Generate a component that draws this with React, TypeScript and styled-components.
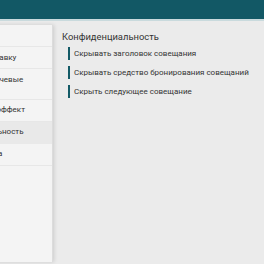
import styled, { createGlobalStyle } from 'styled-components';

const GlobalStyle = createGlobalStyle`
    html, body {
        margin: 0;
        padding: 0;
        background: #ebebeb;
        font-family: Roboto, "Noto Sans", sans-serif;
        overflow: hidden;
    }
`;

const Page = styled.div`
    width: 264px;
    height: 264px;
    display: flex;
    flex-direction: column;
    background: #ebebeb;
    overflow: hidden;
`;

const TopBar = styled.div`
    height: 19px;
    background: #125865;
    border-bottom: 2px solid #c9dadd;
    flex-shrink: 0;
`;

const Body = styled.div`
    flex: 1;
    display: flex;
    padding-top: 4px;
    min-height: 0;
`;

const SidePanel = styled.nav`
    width: 113px;
    margin-left: -61px;
    margin-bottom: 2px;
    background: #f4f4f4;
    border-right: 1px solid #dcdcdc;
    box-shadow: 1px 0 4px rgba(0, 0, 0, 0.14);
    flex-shrink: 0;
`;

const MenuItem = styled.div<{ $active?: boolean }>`
    padding: 6.5px 8px 6px 2px;
    font-size: 8px;
    line-height: 8.5px;
    color: #333;
    background: ${p => (p.$active ? '#e9e9e9' : 'transparent')};
    border-bottom: 1px solid ${p => (p.$active ? '#e9e9e9' : '#e7e7e7')};
    white-space: nowrap;
`;

const Content = styled.main`
    flex: 1;
    padding: 6px 0 0 9px;
`;

const Title = styled.h2`
    margin: 0 0 4px;
    font-size: 9.4px;
    font-weight: 400;
    line-height: 12px;
    color: #333;
`;

const Option = styled.div`
    display: flex;
    align-items: center;
    gap: 4px;
    height: 13px;
    margin: 0 0 6px 6px;
    font-size: 8px;
    color: #333;
    white-space: nowrap;
`;

const Marker = styled.span`
    width: 2px;
    height: 13px;
    background: #135a66;
`;

const menu = [
    'Общие',
    'Настроить заставку',
    'Голосовые и речевые\nкоманды',
    'Использовать эффект',
    'Конфиденциальность',
    'Запись с экрана',
];

const options = [
    'Скрывать заголовок совещания',
    'Скрывать средство бронирования совещаний',
    'Скрыть следующее совещание',
];

const App = () => {
    return <Page>
        <GlobalStyle />
        <TopBar />
        <Body>
            <SidePanel>
                {menu.map(label => (
                    <MenuItem key={label} $active={label === 'Конфиденциальность'}>
                        {label.split('\n').map((line, i) => <div key={i}>{line}</div>)}
                    </MenuItem>
                ))}
            </SidePanel>
            <Content>
                <Title>Конфиденциальность</Title>
                {options.map(text => (
                    <Option key={text}>
                        <Marker />
                        {text}
                    </Option>
                ))}
            </Content>
        </Body>
    </Page>
}

export default App;
